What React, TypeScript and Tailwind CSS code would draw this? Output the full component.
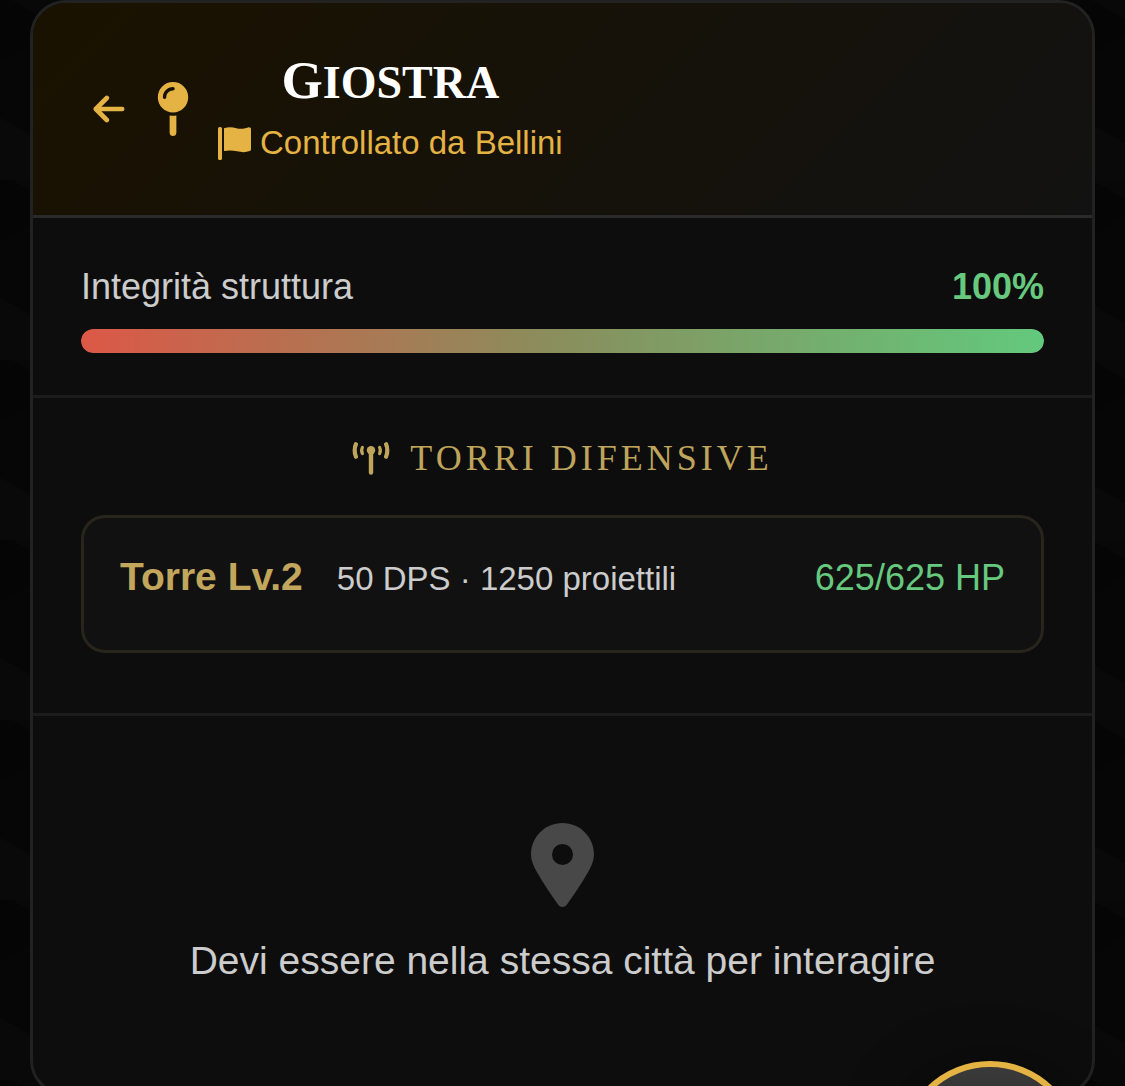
import { FaMapPin } from "react-icons/fa6";

type Tower = {
  level: number;
  dps: number;
  ammo: number;
  hp: number;
  maxHp: number;
};

const INTEGRITY = 100;

const TOWERS: Tower[] = [
  { level: 2, dps: 50, ammo: 1250, hp: 625, maxHp: 625 },
];

function ArrowIcon() {
  return (
    <svg
      viewBox="0 0 32 28"
      className="h-7 w-8"
      fill="none"
      stroke="currentColor"
      strokeWidth="4.6"
      strokeLinecap="round"
      strokeLinejoin="round"
      aria-hidden="true"
    >
      <path d="M29.2 14H2.8M13.8 3 2.8 14l11 11" />
    </svg>
  );
}

function FlagIcon() {
  return (
    <svg
      viewBox="0 0 33 33"
      className="h-[33px] w-[33px] shrink-0"
      fill="currentColor"
      aria-hidden="true"
    >
      <rect x="0" y="0" width="4" height="33" rx="1.6" />
      <path d="M6 1.2C10.5-.1 14.5.2 18.5 1.3c4 1.1 7.5.4 11.7-.9 1.5-.5 2.8.2 2.8 1.7v20.2c0 .9-.5 1.5-1.3 1.8-4.2 1.5-8.2 1.2-12.7.2-4.500-1-8.500-1.100-13-.2z" />
    </svg>
  );
}

function BroadcastIcon() {
  return (
    <svg
      viewBox="0 0 38 33"
      className="h-[33px] w-[38px] shrink-0"
      fill="none"
      stroke="currentColor"
      strokeLinecap="round"
      aria-hidden="true"
    >
      <circle cx="19" cy="8.3" r="4.2" fill="currentColor" stroke="none" />
      <path strokeWidth="4.4" d="M19 9v21.6" />
      <path
        strokeWidth="4.2"
        d="M3.900 2.300C2.300 5.500 2.300 11.300 3.900 14.700M34.100 2.300c1.600 3.200 1.600 9 0 12.400"
      />
      <path
        strokeWidth="3.200"
        d="M10.400 5.400c-1 2-1 4.200 0 6.200M27.600 5.400c1 2 1 4.200 0 6.200"
      />
    </svg>
  );
}

function LocationIcon() {
  return (
    <svg
      viewBox="0 0 63 84"
      className="h-[84px] w-[63px] text-[#484848]"
      fill="currentColor"
      fillRule="evenodd"
      aria-hidden="true"
    >
      <path d="M31.5 0C14 0 0 14 0 31.5c0 6 2.500 11.500 6 17.700C12.500 61 20 71.500 27.200 81.700c2.300 3 6.300 3 8.600 0C43 71.500 50.500 61 57 49.200c3.500-6.200 6-11.700 6-17.700C63 14 49 0 31.500 0zm0 21a10.500 10.500 0 1 1 0 21 10.500 10.500 0 0 1 0-21z" />
    </svg>
  );
}

function Header() {
  return (
    <header className="flex items-center border-b-3 border-[#2a2a2a] bg-linear-135/srgb from-[#1a1200] to-[#121212] px-12 py-[47px] text-[#e5b344]">
      <button type="button" aria-label="Indietro" className="p-3">
        <ArrowIcon />
      </button>
      <FaMapPin className="ml-[19px] h-[54px] w-[34px]" />
      <div className="ml-7 text-center">
        <h1 className="mb-[5px] font-['Liberation_Serif',serif] text-[46px] leading-[60px] font-bold text-white uppercase first-letter:text-[53px]">
          Giostra
        </h1>
        <p className="flex items-center gap-[9px] text-[33px] leading-[50px]">
          <FlagIcon />
          Controllato da Bellini
        </p>
      </div>
    </header>
  );
}

function Integrity() {
  return (
    <section className="border-b-3 border-[#1c1c1c] px-12 py-[42px]">
      <div className="mb-[15px] flex justify-between text-[36px] leading-[54px]">
        <span>Integrità struttura</span>
        <span className="font-bold text-[#66c97e]">{INTEGRITY}%</span>
      </div>
      <div className="h-6 overflow-hidden rounded-full bg-[#1c1c1c]">
        <div
          className="h-full rounded-full bg-linear-to-r/srgb from-[#dc5847] via-[#888f5d] to-[#63c97d]"
          style={{ width: `${INTEGRITY}%` }}
        />
      </div>
    </section>
  );
}

function Towers() {
  return (
    <section className="border-b-3 border-[#1c1c1c] px-12 pt-9 pb-[60px]">
      <h2 className="mb-[33px] flex items-center justify-center gap-5 font-['Liberation_Serif',serif] text-[36px] leading-[48px] tracking-[4px] text-[#bfa45c] uppercase">
        <BroadcastIcon />
        Torri Difensive
      </h2>
      <ul>
        {TOWERS.map((t) => (
          <li
            key={t.level}
            className="flex items-baseline rounded-3xl border-3 border-[#28251d] bg-[#111111] px-9 pt-8 pb-11 leading-[54px]"
          >
            <strong className="text-[39px] text-[#c2a65c]">
              Torre Lv.{t.level}
            </strong>
            <span className="ml-[34px] text-[33px]">
              {t.dps} DPS · {t.ammo} proiettili
            </span>
            <span className="ml-auto text-[36px] text-[#66c97e]">
              {t.hp}/{t.maxHp} HP
            </span>
          </li>
        ))}
      </ul>
    </section>
  );
}

export default function App() {
  return (
    <div className="h-screen overflow-hidden bg-[#060606] bg-[linear-gradient(30deg,#090909_25%,transparent_25%,transparent_75%,#080808_75%),linear-gradient(150deg,#050505_25%,transparent_25%,transparent_75%,#080808_75%)] bg-size-[120px_180px] px-[30px] font-['Liberation_Sans',Arial,sans-serif] text-[#cccccc]">
      <main className="overflow-hidden rounded-[36px] border-3 border-[#222222] bg-[#0d0d0d]">
        <Header />
        <Integrity />
        <Towers />
        <section className="flex flex-col items-center px-12 pt-[107px] pb-[105px]">
          <LocationIcon />
          <p className="mt-[27px] text-[39px] leading-[54px]">
            Devi essere nella stessa città per interagire
          </p>
        </section>
      </main>
      <button
        type="button"
        aria-label="Menu"
        className="fixed right-[45px] -bottom-[155px] size-[180px] rounded-full border-6 border-[#e5b344] bg-linear-to-b from-[#3a3a3a] to-[#1a1a1a] shadow-[0_12px_60px_rgba(0,0,0,0.6)]"
      />
    </div>
  );
}
